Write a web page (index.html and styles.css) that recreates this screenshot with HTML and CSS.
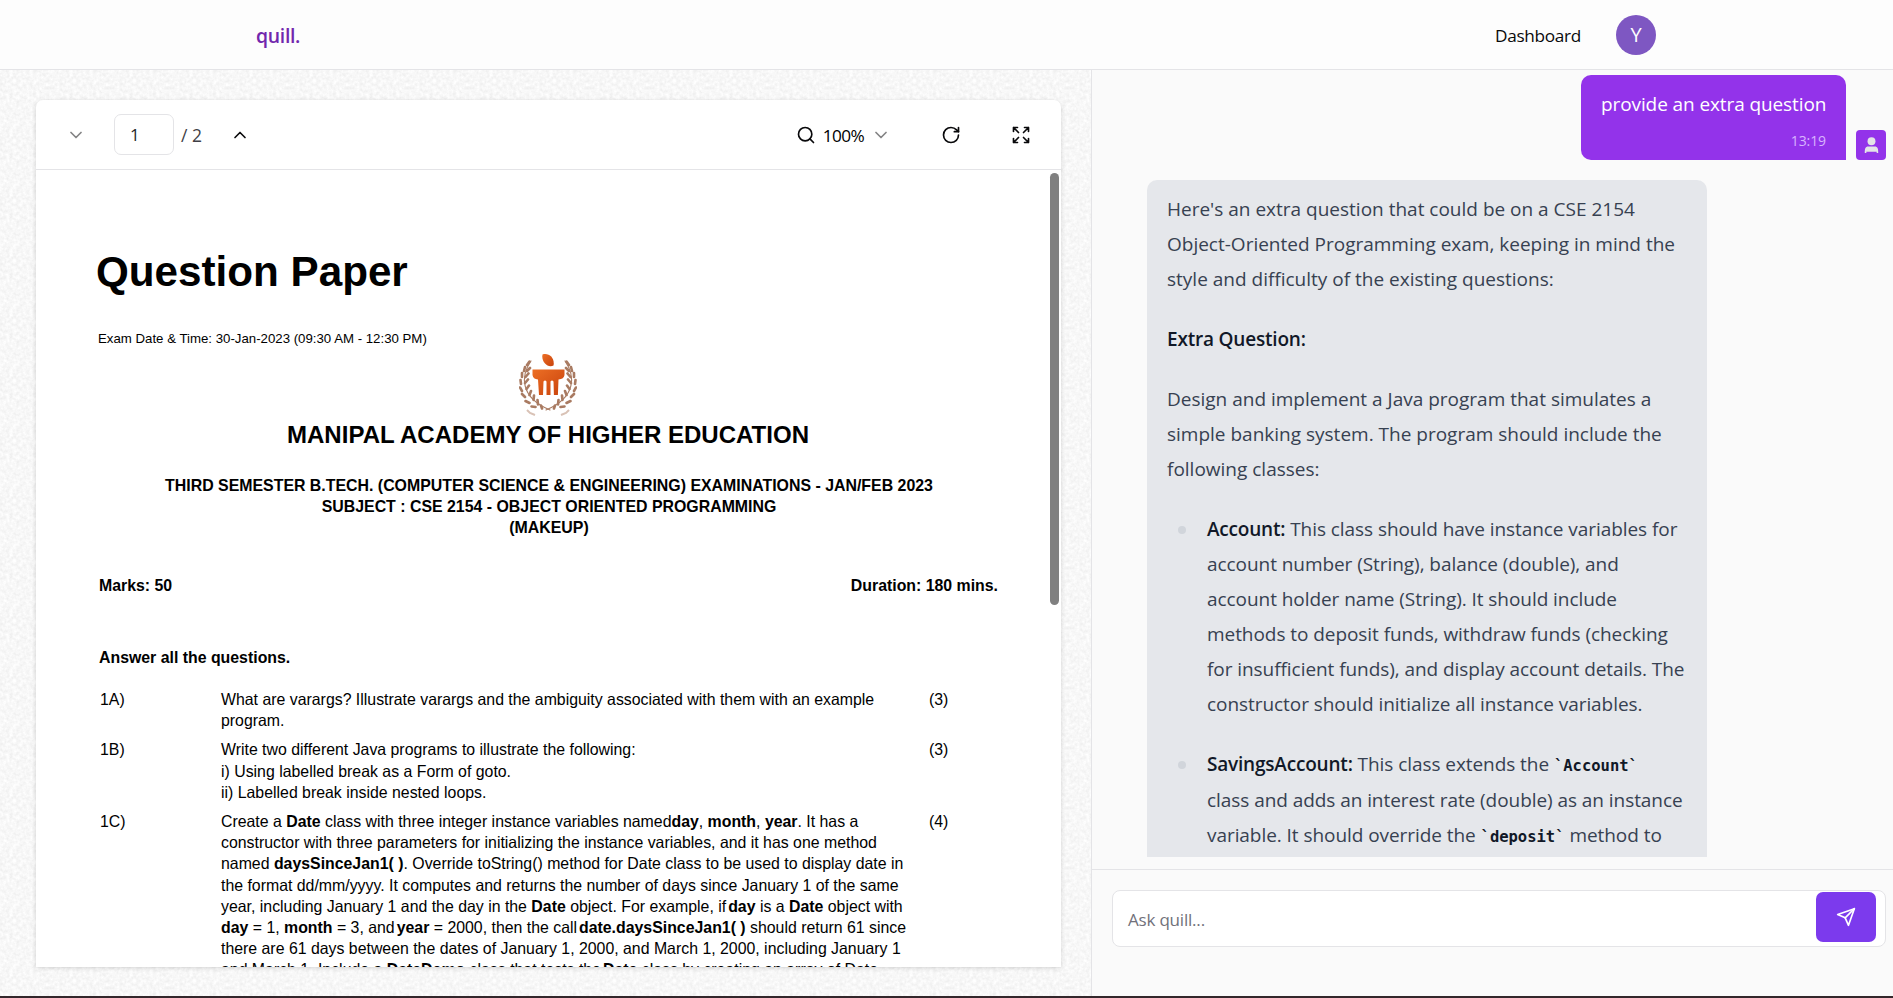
FILE: index.html
```html
<!DOCTYPE html>
<html lang="en">
<head>
<meta charset="utf-8">
<title>quill.</title>
<link rel="stylesheet" href="styles.css">
</head>
<body>
<div class="app">
  <header class="nav">
    <a class="brand">quill.</a>
    <div class="nav-right"><span class="dash">Dashboard</span><span class="avatar">Y</span></div>
  </header>
  <div class="main">
    <section class="left">
      <svg class="noise" aria-hidden="true">
        <defs>
          <filter id="grain" x="0" y="0" width="100%" height="100%" color-interpolation-filters="sRGB">
            <feTurbulence type="fractalNoise" baseFrequency="0.3" numOctaves="3" seed="4" stitchTiles="stitch"/>
            <feColorMatrix values="0.1 0 0 0 0.92  0.1 0 0 0 0.92  0.1 0 0 0 0.92  0 0 0 0 1"/>
          </filter>
          <pattern id="tile" width="60" height="60" patternUnits="userSpaceOnUse"><rect width="60" height="60" filter="url(#grain)"/></pattern>
        </defs>
        <rect width="100%" height="100%" fill="url(#tile)"/>
      </svg>
      <div class="viewer">
        <div class="toolbar">
          <div class="pager">
            <span class="btn dim"><svg class="ic" viewBox="0 0 24 24"><path d="m6 9 6 6 6-6"/></svg></span>
            <span class="page-input">1</span>
            <span class="total">/ 2</span>
            <span class="btn up"><svg class="ic" viewBox="0 0 24 24"><path d="m18 15-6-6-6 6"/></svg></span>
          </div>
          <div class="tools">
            <span class="zoom"><svg class="ic" viewBox="0 0 24 24"><circle cx="11" cy="11" r="8"/><path d="m21 21-4.3-4.3"/></svg><span class="pct">100%</span><svg class="ic dim" viewBox="0 0 24 24"><path d="m6 9 6 6 6-6"/></svg></span>
            <svg class="ic" viewBox="0 0 24 24"><path d="M21 12a9 9 0 1 1-9-9c2.52 0 4.93 1 6.74 2.74L21 8"/><path d="M21 3v5h-5"/></svg>
            <svg class="ic" viewBox="0 0 24 24"><path d="m21 21-6-6m6 6v-4.8m0 4.8h-4.8"/><path d="M3 16.2V21m0 0h4.8M3 21l6-6"/><path d="M21 7.8V3m0 0h-4.8M21 3l-6 6"/><path d="M3 7.8V3m0 0h4.8M3 3l6 6"/></svg>
          </div>
        </div>
        <div class="doc">
          <div class="thumb"></div>
          <h1>Question Paper</h1>
          <p class="when">Exam Date &amp; Time: 30-Jan-2023 (09:30 AM - 12:30 PM)</p>
          <svg class="crest" viewBox="0 0 58 63">
            <defs>
              <linearGradient id="or" x1="0" y1="0" x2="1" y2="1"><stop offset="0" stop-color="#ec6f25"/><stop offset="1" stop-color="#c9420c"/></linearGradient>
              <g id="branch" fill="none" stroke="#a97b62" stroke-linecap="round">
                <path stroke-width="1.1" d="M12 8C2 22 0 44 31 57"/>
                <path stroke-width="2.6" d="M8 12l2.500-3.500M5 18l1-4M8 18l3-3M3 24v-4M6.500 24l3-3.500M2 31l-.5-4M6 30l3-3.500M3 38l-2-3.500M7.500 36l2.500-3.500M6 44l-3-3M10.500 42l1.500-4M10.500 50l-4-2M14.500 47l.5-4.500M16.500 54l-4-.5M19 51.500l-.5-4.500M23 55.500l-1-3"/>
              </g>
            </defs>
            <use href="#branch"/><use href="#branch" transform="matrix(-1 0 0 1 58 0)"/>
            <path fill="none" stroke="#d9c2b6" stroke-width="2" d="M8 57l3 3 5 2M50 57l-3 3-5 2"/>
            <path fill="url(#or)" d="M23.500 1.500C30-.5 36 5 34.500 12.500 29 15.500 22 9 23.500 1.500z"/>
            <path fill="url(#or)" d="M13.500 16.500H45.500V22q-.5 4-6 4.500l-.6 15.500h-4L34.500 28.500q-1.500-2-3 0V42h-4V28.500q-1.500-2-3 0L24 42h-4L19 26.500q-5-.5-5.500-4.500z"/>
          </svg>
          <h2>MANIPAL ACADEMY OF HIGHER EDUCATION</h2>
          <p class="sub">THIRD SEMESTER B.TECH. (COMPUTER SCIENCE &amp; ENGINEERING) EXAMINATIONS - JAN/FEB 2023<br>SUBJECT : CSE 2154 - OBJECT ORIENTED PROGRAMMING<br>(MAKEUP)</p>
          <div class="meta"><span>Marks: 50</span><span>Duration: 180 mins.</span></div>
          <p class="answer">Answer all the questions.</p>
          <div class="q qa"><span>1A)</span><p>What are varargs? Illustrate varargs and the ambiguity associated with them with an example<br>program.</p><span>(3)</span></div>
          <div class="q qb"><span>1B)</span><p>Write two different Java programs to illustrate the following:<br>i) Using labelled break as a Form of goto.<br>ii) Labelled break inside nested loops.</p><span>(3)</span></div>
          <div class="q"><span>1C)</span><p>Create a <b>Date</b> class with three integer instance variables named<b>day</b>, <b>month</b>, <b>year</b>. It has a<br>constructor with three parameters for initializing the instance variables, and it has one method<br>named <b>daysSinceJan1( )</b>. Override toString() method for Date class to be used to display date in<br>the format dd/mm/yyyy. It computes and returns the number of days since January 1 of the same<br>year, including January 1 and the day in the <b>Date</b> object. For example, if<b class="hair">day</b> is a <b>Date</b> object with<br><b>day</b> = 1, <b>month</b> = 3, and<b class="hair">year</b> = 2000, then the call<b class="hair">date.daysSinceJan1( )</b> should return 61 since<br>there are 61 days between the dates of January 1, 2000, and March 1, 2000, including January 1<br>and March 1. Include a <b>DateDemo</b> class that tests the<b class="hair">Date</b> class by creating an array of Date</p><span>(4)</span></div>
        </div>
      </div>
    </section>
    <section class="chat">
      <div class="messages">
        <div class="row">
          <div class="user"><p>provide an extra question</p><time>13:19</time></div>
          <span class="me"><svg viewBox="0 0 24 24" fill="#e4e4e7"><circle cx="12" cy="7.300" r="5"/><path d="M3.500 22c0-5 .5-8 4.500-8h8c4 0 4.500 3 4.500 8h-2v-1.500H5.500V22z"/></svg></span>
        </div>
        <div class="ai">
          <p>Here's an extra question that could be on a CSE 2154<br>Object-Oriented Programming exam, keeping in mind the<br>style and difficulty of the existing questions:</p>
          <p><strong>Extra Question:</strong></p>
          <p>Design and implement a Java program that simulates a<br>simple banking system. The program should include the<br>following classes:</p>
          <ul>
            <li><strong>Account:</strong> This class should have instance variables for<br>account number (String), balance (double), and<br>account holder name (String). It should include<br>methods to deposit funds, withdraw funds (checking<br>for insufficient funds), and display account details. The<br>constructor should initialize all instance variables.</li>
            <li class="savings"><strong>SavingsAccount:</strong> This class extends the <code>`Account`</code><br>class and adds an interest rate (double) as an instance<br>variable. It should override the <code>`deposit`</code> method to</li>
          </ul>
        </div>
      </div>
      <div class="composer"><div class="field"><span class="ph">Ask quill...</span><span class="send"><svg viewBox="0 0 24 24"><path d="m22 2-7 20-4-9-9-4Z"/><path d="M22 2 11 13"/></svg></span></div></div>
    </section>
  </div>
  <div class="edge"></div>
</div>
</body>
</html>
```
FILE: styles.css
```css
* { box-sizing: border-box; margin: 0; padding: 0; }
body { width: 1893px; height: 998px; overflow: hidden; background: #fafafa; font-family: "Open Sans", "Noto Sans", sans-serif; }
.app { height: 998px; display: flex; flex-direction: column; }
.nav { height: 70px; flex: none; background: #fdfdfd; border-bottom: 1px solid #e4e4e7; display: flex; justify-content: space-between; padding: 0 237px 0 256px; align-items: center; }
.brand { color: #7127ad; font-size: 19.400px; font-weight: 600; line-height: 28px; letter-spacing: -0.3px; padding-top: 2px; }
.nav-right { display: flex; align-items: center; gap: 35px; }
.dash { font-size: 17.200px; font-weight: 500; color: #09090b; letter-spacing: -0.3px; padding-top: 1px; }
.avatar { width: 40px; height: 40px; border-radius: 50%; background: #7e57c2; color: #fff; display: flex; align-items: center; justify-content: center; font-size: 20px; }
.main { flex: 1; display: flex; min-height: 0; }
.left { position: relative; width: 1092px; border-right: 1px solid #e4e4e7; padding: 30px 30px 29px 36px; }
.noise { position: absolute; inset: 0; width: 100%; height: 100%; }
.viewer { position: relative; height: 867px; background: #fff; border-radius: 7px 7px 0 0; box-shadow: 0 1px 4px rgba(0,0,0,.16); overflow: hidden; display: flex; flex-direction: column; }
.toolbar { height: 70px; flex: none; border-bottom: 1px solid #e4e4e7; display: flex; justify-content: space-between; align-items: center; padding: 0 30px; }
.pager, .tools, .zoom { display: flex; align-items: center; }
.ic { width: 20px; height: 20px; fill: none; stroke: #09090b; stroke-width: 2; stroke-linecap: round; stroke-linejoin: round; display: block; }
.dim { opacity: .5; }
.page-input { width: 60px; height: 41px; margin-left: 28px; border: 1px solid #e4e4e7; border-radius: 7px; font-size: 17px; line-height: 40px; padding-left: 15px; color: #27272a; }
.total { margin-left: 7px; width: 49px; font-size: 17.500px; color: #3f3f46; padding-top: 1px; }
.tools { gap: 50px; }
.zoom { gap: 7px; }
.pct { font-size: 17.200px; font-weight: 500; letter-spacing: -0.6px; padding-top: 1px; }
.doc { position: relative; flex: 1; overflow: hidden; padding-left: 60px; font-family: "Liberation Sans", Arial, sans-serif; color: #000; font-size: 15.870px; line-height: 21.200px; white-space: nowrap; }
.thumb { position: absolute; right: 2px; top: 3px; width: 9px; height: 432px; border-radius: 5px; background: #808080; }
.doc h1 { font-size: 42.200px; line-height: 50px; margin-top: 77px; }
.when { font-size: 13.240px; line-height: 16px; margin: 34px 0 0 2px; }
.crest { display: block; width: 58px; height: 63px; margin: 6px 0 0 423px; }
.doc h2 { font-size: 24.040px; line-height: 28px; margin-top: 5px; width: 904px; text-align: center; }
.sub { font-weight: 700; font-size: 15.900px; width: 906px; text-align: center; margin-top: 26px; }
.meta { display: flex; justify-content: space-between; width: 902px; padding-left: 3px; font-weight: 700; margin-top: 36px; }
.answer { font-weight: 700; margin: 51px 0 0 3px; }
.q { display: grid; grid-template-columns: 121px 708px 40px; margin-left: 4px; margin-bottom: 8px; }
.qa { margin-top: 21px; }
.hair { margin-left: 2px; }
.chat { flex: 1; display: flex; flex-direction: column; }
.messages { height: 787px; overflow: hidden; padding-top: 5px; }
.row { display: flex; justify-content: flex-end; align-items: flex-end; gap: 10px; padding-right: 7px; }
.user { width: 265px; height: 85px; background: #9333ea; border-radius: 10px 10px 0 10px; color: #fff; padding: 12px 20px 0; text-align: right; font-size: 19px; letter-spacing: -0.1px; line-height: 35px; white-space: nowrap; }
.user time { display: block; font-size: 14px; line-height: 20px; color: #d8b4fe; margin-top: 9px; }
.me { width: 30px; height: 30px; background: #9333ea; border-radius: 4px; display: flex; align-items: center; justify-content: center; }
.me svg { width: 19px; height: 20px; }
.ai { width: 560px; height: 760px; margin: 20px 0 0 55px; border-radius: 10px; background: #e5e7eb; padding: 12px 20px; color: #374151; font-size: 19px; line-height: 35px; white-space: nowrap; }
.ai p, .ai li { margin-bottom: 25px; }
.ai ul { list-style: none; padding-left: 40px; }
.ai li { position: relative; letter-spacing: -0.06px; }
.ai .savings { line-height: 35.500px; }
.ai li::before { content: ""; position: absolute; left: -29px; top: 14px; width: 8px; height: 8px; border-radius: 50%; background: #d1d5db; }
strong, code { color: #111827; font-weight: 600; }
strong { letter-spacing: -0.2px; }
code { font-family: "DejaVu Sans Mono", monospace; font-size: 15.500px; letter-spacing: 0; line-height: 1; }
.composer { border-top: 1px solid #e4e4e7; margin-top: 12px; padding: 20px 7px 0 20px; }
.field { height: 57px; border: 1px solid #e4e4e7; border-radius: 8px; background: #fff; display: flex; justify-content: space-between; padding: 1px 9px 0 15px; }
.ph { font-size: 17px; line-height: 56px; letter-spacing: -0.2px; color: #71717a; }
.send { width: 60px; height: 50px; border-radius: 7px; background: #7c3aed; display: flex; align-items: center; justify-content: center; }
.send svg { width: 20px; height: 20px; fill: none; stroke: #fff; stroke-width: 2; stroke-linejoin: round; stroke-linecap: round; }
.edge { height: 2px; flex: none; background: #33272b; }
```
